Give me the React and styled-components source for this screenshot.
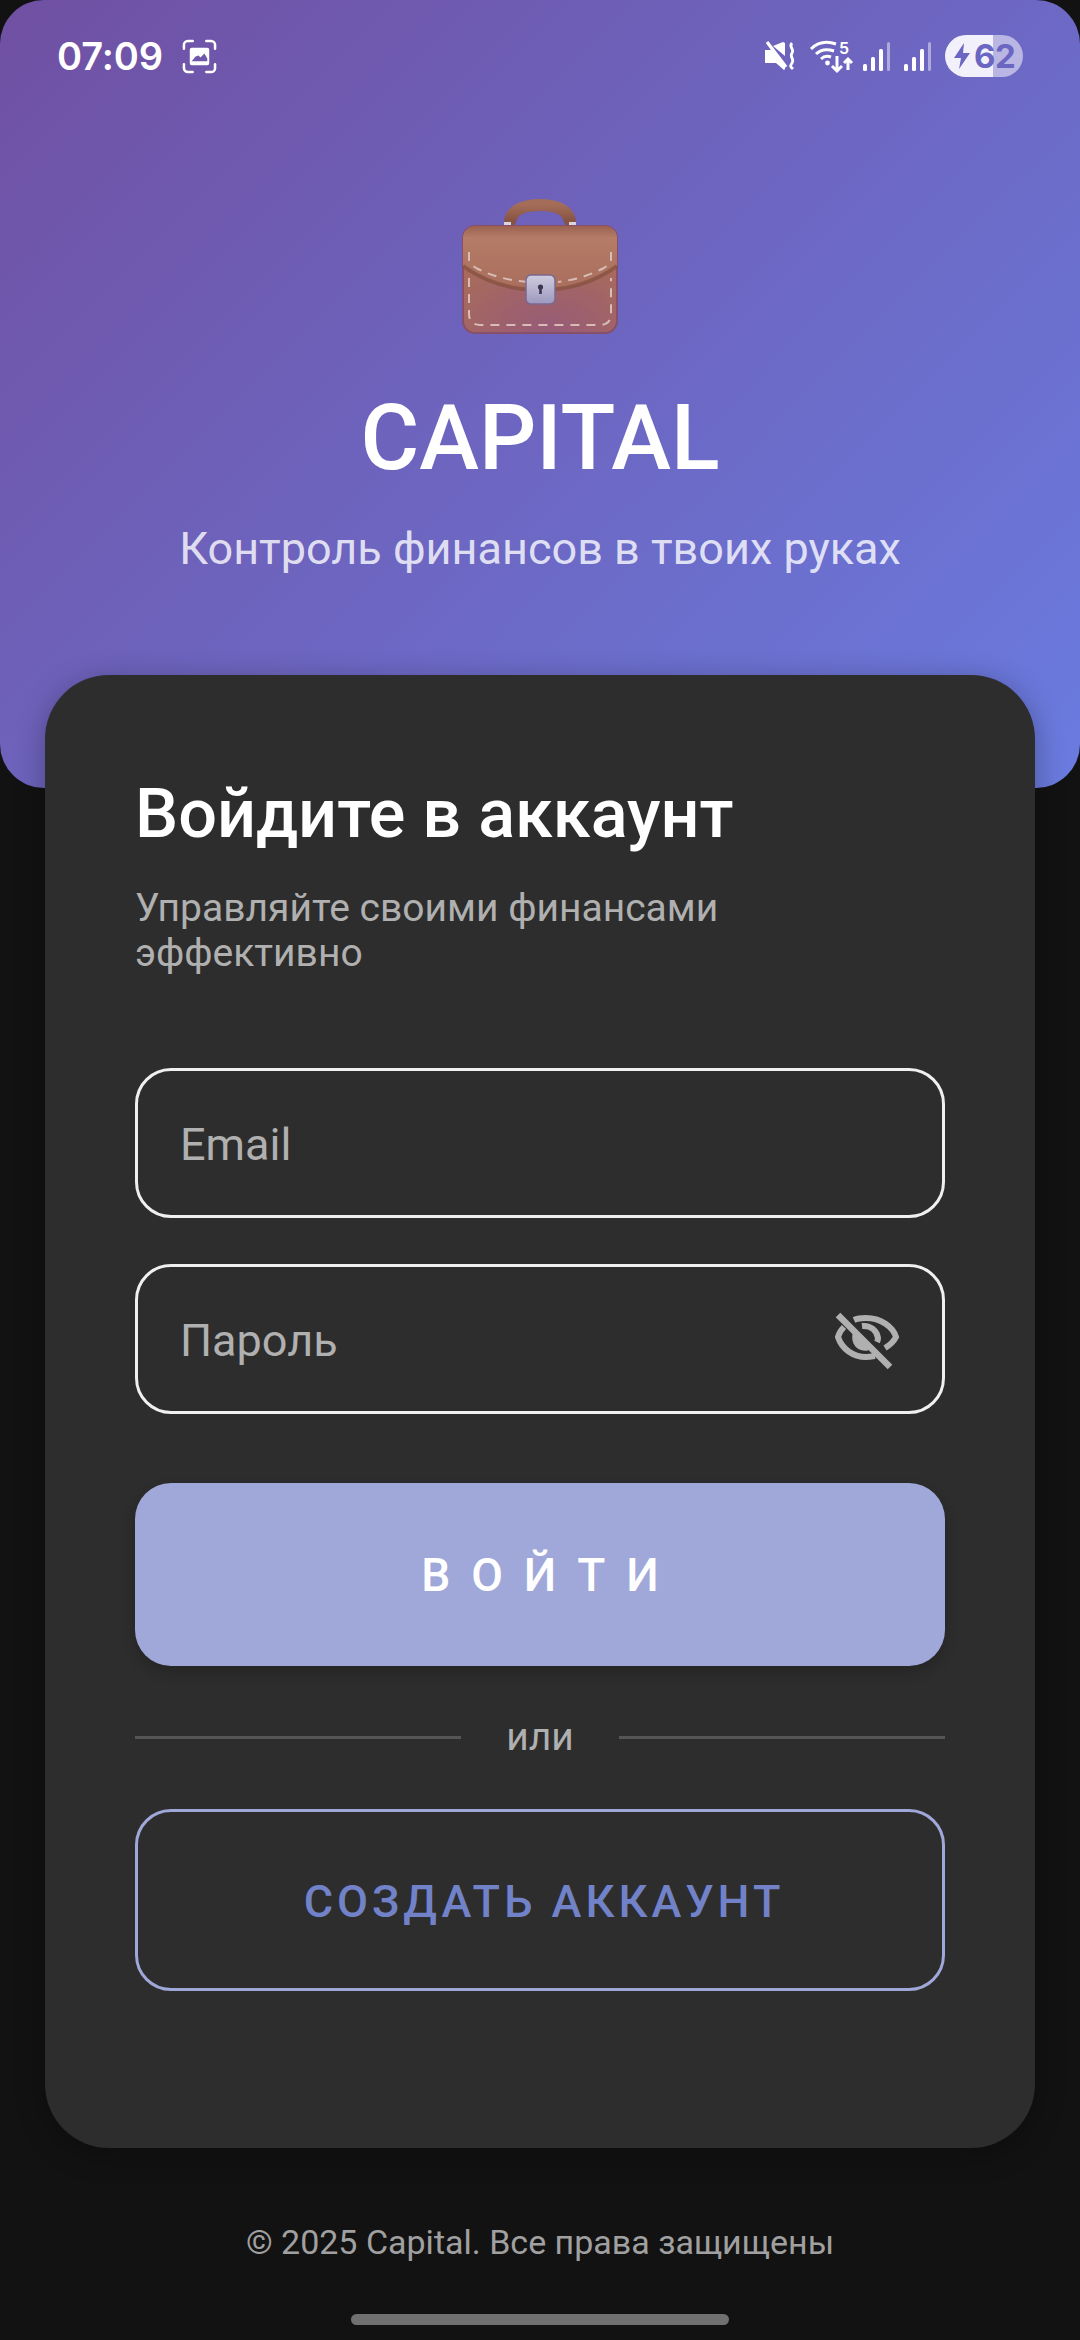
import React from 'react'
import styled, { createGlobalStyle } from 'styled-components'

const GlobalStyle = createGlobalStyle`
  html, body {
    margin: 0;
    padding: 0;
    background: #121212;
  }
  body {
    font-family: Roboto, "Liberation Sans", sans-serif;
  }
  * {
    box-sizing: border-box;
  }
`

const Screen = styled.div`
  width: 1080px;
  height: 2340px;
  overflow: hidden;
  display: flex;
  flex-direction: column;
  align-items: center;
  background: #121212;
`

const Hero = styled.header`
  width: 100%;
  height: 788px;
  flex: none;
  display: flex;
  flex-direction: column;
  align-items: center;
  padding: 32px 0 0;
  border-radius: 44px;
  background: linear-gradient(135deg, #7050a2 0%, #6a7bdf 100%);
`

const StatusBar = styled.div`
  width: 100%;
  height: 48px;
  padding: 0 57px;
  display: flex;
  align-items: center;
  justify-content: space-between;
  color: #fff;
`

const StatusLeft = styled.div`
  display: flex;
  align-items: center;
  gap: 19px;
`

const Clock = styled.span`
  font-family: Inter, Roboto, sans-serif;
  font-size: 38px;
  font-weight: 600;
  letter-spacing: -0.1px;
`

const StatusRight = styled.div`
  display: flex;
  align-items: center;
  gap: 14px;
`

const WifiSvg = styled.svg`
  margin-right: -4px;
  overflow: visible;
`

const Battery = styled.div`
  width: 78px;
  height: 42px;
  border-radius: 21px;
  overflow: hidden;
  display: flex;
  align-items: center;
  padding-left: 7px;
  gap: 2px;
  background: linear-gradient(90deg, #f2f1fb 0 62%, #b9b6e3 62% 100%);
  color: #6a66c2;
`

const BatteryLevel = styled.span`
  font-family: Inter, Roboto, sans-serif;
  font-size: 33px;
  font-weight: 700;
  line-height: 42px;
  letter-spacing: -0.5px;
`

const BagIcon = styled.svg`
  margin-top: 116px;
  display: block;
`

const Brand = styled.h1`
  margin: 50px 0 0;
  color: #fff;
  font-size: 90px;
  line-height: 106px;
  font-weight: 500;
`

const Tagline = styled.p`
  margin: 29px 0 0;
  color: rgba(255, 255, 255, 0.8);
  font-size: 45px;
  line-height: 56px;
`

const Card = styled.main`
  width: 990px;
  height: 1473px;
  flex: none;
  margin-top: -113px;
  position: relative;
  padding: 100px 90px 0;
  border-radius: 64px;
  background: #2d2d2d;
  box-shadow: 0 6px 30px rgba(0, 0, 0, 0.3);
`

const Heading = styled.h2`
  margin: 0;
  color: #fff;
  font-size: 68.4px;
  line-height: 78px;
  font-weight: 500;
`

const Subheading = styled.p`
  margin: 33px 0 0;
  color: #b0b0b0;
  font-size: 39px;
  line-height: 45px;
`

const Form = styled.form`
  margin-top: 92px;
  display: flex;
  flex-direction: column;
`

const Field = styled.div`
  height: 150px;
  margin-bottom: 46px;
  padding: 0 37px 0 42px;
  display: flex;
  align-items: center;
  justify-content: space-between;
  border: 3px solid #f0f0f0;
  border-radius: 36px;
`

const Placeholder = styled.span`
  margin-top: 2px;
  color: #b0b0b0;
  font-size: 45px;
`

const EyeSvg = styled.svg`
  margin-top: 4px;
`

const LoginButton = styled.button`
  height: 183px;
  margin-top: 23px;
  padding: 0 0 0 21px;
  border: none;
  border-radius: 36px;
  background: #9fa8d8;
  color: #fff;
  font-family: inherit;
  font-size: 46px;
  font-weight: 500;
  letter-spacing: 21px;
  box-shadow: 0 6px 14px rgba(0, 0, 0, 0.2);
`

const Divider = styled.div`
  margin-top: 49px;
  height: 44px;
  display: flex;
  align-items: center;
  gap: 45px;
`

const Line = styled.span`
  flex: 1;
  height: 3px;
  background: #555;
`

const DividerText = styled.span`
  color: #b0b0b0;
  font-size: 39px;
`

const CreateButton = styled.button`
  height: 182px;
  margin-top: 50px;
  padding: 2px 0 0 8px;
  border: 3px solid #9fa8d8;
  border-radius: 36px;
  background: transparent;
  color: #7282c8;
  font-family: inherit;
  font-size: 45px;
  font-weight: 500;
  letter-spacing: 4px;
`

const Footer = styled.footer`
  margin-top: 72px;
  color: #a0a0a0;
  font-size: 34px;
  line-height: 44px;
`

const HomeBar = styled.div`
  width: 378px;
  height: 11px;
  margin-top: 50px;
  border-radius: 6px;
  background: #707070;
`

function MuteIcon() {
  return (
    <svg width="32" height="30" viewBox="0 0 32 30" fill="none">
      <path d="M0 9h5l2-1 13 15v5l-1 1-8-7H0z M8 5l10-4 2 1v13z" fill="#fff" />
      <path d="M2 1l19 25" stroke="#fff" strokeWidth="3.2" />
      <path d="M27 2c-4 4 3 6 0 10s3 6 0 10 0 5 1 6" stroke="#fff" strokeWidth="2.8" />
    </svg>
  )
}

function WifiIcon() {
  return (
    <WifiSvg width="42" height="32" viewBox="0 0 42 32" fill="none" stroke="#fff" strokeWidth="3">
      <path d="M0 9c7-7 16-8 25-5" />
      <path d="M5 14c5-5 12-5 18-3" />
      <path d="M10 19c3-3 7-3 10-2" />
      <circle cx="16.5" cy="23" r="2.4" fill="#fff" stroke="none" />
      <path d="M26 16v14m-5-4l5 5 5-5" />
      <path d="M37 30V19m-4 4l4-4 4 4" />
      <text x="28" y="14" fill="#fff" stroke="none" fontSize="16" fontWeight="600" fontFamily="Inter, sans-serif">5</text>
    </WifiSvg>
  )
}

function SignalIcon() {
  return (
    <svg width="27" height="29" viewBox="0 0 27 29">
      <rect x="0" y="22" width="4" height="7" rx="1.5" fill="#fff" />
      <rect x="8" y="15" width="4" height="14" rx="1.5" fill="#fff" />
      <rect x="16" y="7" width="4" height="22" rx="1.5" fill="#fff" />
      <rect x="24" y="0" width="3" height="29" rx="1.5" fill="#fff" opacity="0.45" />
    </svg>
  )
}

function CaptureIcon() {
  return (
    <svg width="35" height="35" viewBox="0 0 36 36" fill="none">
      <path d="M2 10V6a4 4 0 0 1 4-4h5 M25 2h5a4 4 0 0 1 4 4v4 M34 26v4a4 4 0 0 1-4 4h-5 M11 34H6a4 4 0 0 1-4-4v-4" stroke="#fff" strokeWidth="2.6" strokeLinecap="round" />
      <path fillRule="evenodd" d="M10 9h16a2 2 0 0 1 2 2v14a2 2 0 0 1-2 2H10a2 2 0 0 1-2-2V11a2 2 0 0 1 2-2z M10 23h16v-3l-3-5-4 4-2-2-3 1z" fill="#fff" />
    </svg>
  )
}

function BoltIcon() {
  return (
    <svg width="20" height="28" viewBox="0 0 20 28" fill="none">
      <path d="M12 1L2 16h7l-2 11 11-16h-7z" fill="#6a66c2" />
    </svg>
  )
}

function BriefcaseIcon() {
  return (
    <BagIcon width="160" height="140" viewBox="0 0 160 140" fill="none">
      <defs>
        <linearGradient id="flap" x1="0" y1="0" x2="0" y2="1">
          <stop offset="0" stopColor="#9a6150" />
          <stop offset="0.18" stopColor="#b47c67" />
          <stop offset="1" stopColor="#a96d5c" />
        </linearGradient>
        <radialGradient id="lower" cx="0.55" cy="1" r="0.75">
          <stop offset="0" stopColor="#965a78" />
          <stop offset="1" stopColor="#a86b5c" />
        </radialGradient>
        <linearGradient id="clasp" x1="0" y1="0" x2="0" y2="1">
          <stop offset="0" stopColor="#cfccdf" />
          <stop offset="1" stopColor="#9c98bf" />
        </linearGradient>
        <linearGradient id="grip" x1="0" y1="0" x2="0" y2="1">
          <stop offset="0" stopColor="#a46d58" />
          <stop offset="1" stopColor="#875243" />
        </linearGradient>
        <filter id="soft">
          <feGaussianBlur stdDeviation="0.7" />
        </filter>
      </defs>
      <g filter="url(#soft)">
        <path d="M50 25C52 14 64 9 80 9s28 5 30 16" stroke="url(#grip)" strokeWidth="12" strokeLinecap="round" />
        <rect x="44" y="26" width="7" height="5" fill="#d9d4e0" />
        <rect x="109" y="26" width="7" height="5" fill="#d9d4e0" />
        <rect x="3" y="30" width="154" height="107" rx="12" fill="url(#lower)" stroke="#87506a" strokeWidth="2" />
        <path d="M3 42a12 12 0 0 1 12-12h130a12 12 0 0 1 12 12v28c-22 16-48 24-77 24s-55-8-77-24z" fill="url(#flap)" />
        <path d="M3 70c22 16 48 24 77 24s55-8 77-24" stroke="#84503f" strokeWidth="4" opacity="0.75" />
        <path d="M9 56v9c2 4 5 6 9 8 18 9 38 13 60 13" stroke="#d8bdb6" strokeWidth="2" strokeDasharray="9 7" />
        <path d="M151 56v9c-2 4-5 6-9 8-14 7-28 11-44 13" stroke="#d8bdb6" strokeWidth="2" strokeDasharray="9 7" />
        <path d="M9 82v36c0 7 4 11 11 11h120c7 0 11-4 11-11V82" stroke="#d8bdb6" strokeWidth="2" strokeDasharray="9 7" />
        <rect x="66" y="79" width="29" height="29" rx="5" fill="url(#clasp)" stroke="#79688f" strokeWidth="1.5" />
        <circle cx="80.5" cy="91" r="2.6" fill="#3e3650" />
        <rect x="79.2" y="91" width="2.6" height="7" fill="#3e3650" />
      </g>
    </BagIcon>
  )
}

function EyeOffIcon() {
  return (
    <EyeSvg width="80" height="72" viewBox="0 0 80 72" fill="none" stroke="#b0b0b0" strokeWidth="6">
      <path d="M29 15C33 13 37 13 41 13C56 13 68 22 71 32C69 36 65 40 60 43" />
      <path d="M19 22C16 25 14 28 13 32C17 44 28 52 41 52C44 52 47 51.5 50 51" />
      <path d="M37 21C46 20 52 26 53 33C53 35 52.5 36 52 37" />
      <path d="M28 27L46 44C42 47 36 46 32 43C28 40 26 33 28 27z" fill="#b0b0b0" stroke="none" />
      <path d="M13 10L65 62" strokeWidth="6.5" />
    </EyeSvg>
  )
}

export default function App() {
  return (
    <Screen>
      <GlobalStyle />
      <Hero>
        <StatusBar>
          <StatusLeft>
            <Clock>07:09</Clock>
            <CaptureIcon />
          </StatusLeft>
          <StatusRight>
            <MuteIcon />
            <WifiIcon />
            <SignalIcon />
            <SignalIcon />
            <Battery>
              <BoltIcon />
              <BatteryLevel>62</BatteryLevel>
            </Battery>
          </StatusRight>
        </StatusBar>
        <BriefcaseIcon />
        <Brand>CAPITAL</Brand>
        <Tagline>Контроль финансов в твоих руках</Tagline>
      </Hero>
      <Card>
        <Heading>Войдите в аккаунт</Heading>
        <Subheading>
          Управляйте своими финансами
          <br />
          эффективно
        </Subheading>
        <Form>
          <Field>
            <Placeholder>Email</Placeholder>
          </Field>
          <Field>
            <Placeholder>Пароль</Placeholder>
            <EyeOffIcon />
          </Field>
          <LoginButton type="button">ВОЙТИ</LoginButton>
          <Divider>
            <Line />
            <DividerText>или</DividerText>
            <Line />
          </Divider>
          <CreateButton type="button">СОЗДАТЬ АККАУНТ</CreateButton>
        </Form>
      </Card>
      <Footer>© 2025 Capital. Все права защищены</Footer>
      <HomeBar />
    </Screen>
  )
}
